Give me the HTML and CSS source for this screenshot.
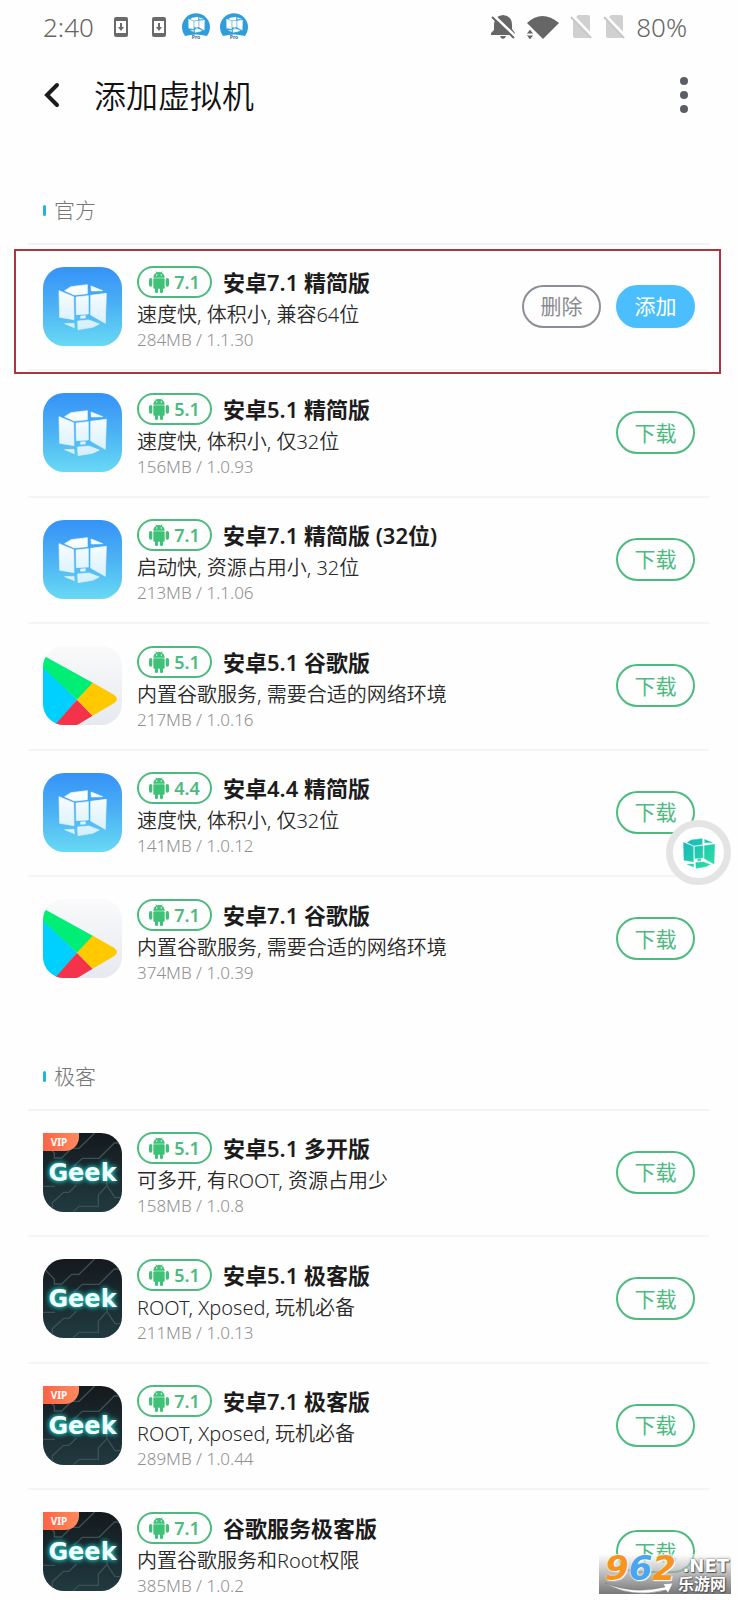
FILE: index.html
```html
<!DOCTYPE html>
<html lang="zh-CN">
<head>
    <meta charset="UTF-8">
    <meta name="viewport" content="width=device-width, initial-scale=1.0">
    <title>添加虚拟机</title>
    <link rel="stylesheet" href="styles.css">
</head>
<body>

<!-- Shared icons -->
<svg class="defs" width="0" height="0" aria-hidden="true">
    <defs>
        <linearGradient id="blue-bg" x1="0" y1="0" x2="0" y2="1">
            <stop offset="0" stop-color="#3592f7"/>
            <stop offset="0.5" stop-color="#4cb2f4"/>
            <stop offset="1" stop-color="#68d9f4"/>
        </linearGradient>
        <linearGradient id="panel" gradientUnits="userSpaceOnUse" x1="0" y1="60" x2="0" y2="198">
            <stop offset="0" stop-color="#ffffff"/>
            <stop offset="1" stop-color="#d3effc"/>
        </linearGradient>
        <linearGradient id="play-bg" x1="0" y1="0" x2="0" y2="1">
            <stop offset="0" stop-color="#fafafb"/>
            <stop offset="1" stop-color="#e6e9ef"/>
        </linearGradient>
        <linearGradient id="geek-bg" x1="0" y1="0" x2="0" y2="1">
            <stop offset="0" stop-color="#15191d"/>
            <stop offset="1" stop-color="#203a40"/>
        </linearGradient>
        <linearGradient id="teal" gradientUnits="userSpaceOnUse" x1="60" y1="60" x2="190" y2="198">
            <stop offset="0" stop-color="#17b5bd"/>
            <stop offset="1" stop-color="#2fe0a0"/>
        </linearGradient>
    </defs>
    <symbol id="cube" viewBox="9 9 237 237">
        <g stroke-width="2" stroke-linejoin="round">
            <path d="M74 80 93 68 142 62V89L103 93Z"/>
            <path d="M153 66 188 80 154 81Z"/>
            <path d="M57 80 101 98 102 167 59 160Z"/>
            <path d="M108 99 145 95V150L109 152Z"/>
            <path d="M152 94 199 88 196 178 152 153Z"/>
            <path d="M122 156 136 155V162L122 163Z"/>
            <path d="M74 179 102 178 103 191Z"/>
            <path d="M113 171 147 168 178 180 158 190 114 197Z"/>
        </g>
    </symbol>
    <symbol id="vm" viewBox="0 0 79 79">
        <rect width="79" height="79" fill="url(#blue-bg)"/>
        <use href="#cube" width="79" height="79" fill="url(#panel)" stroke="url(#panel)"/>
    </symbol>
    <symbol id="play" viewBox="0 0 237 237">
        <rect width="237" height="237" fill="url(#play-bg)"/>
        <path fill="#00d0ff" d="M0 60 102 161 40 237H0Z"/>
        <path fill="#f43249" d="M102 161 149 209 108 234Q103 237 98 237H36Z"/>
        <path fill="#ffc900" d="M147 109 214 147Q230 160 214 171L149 209 102 161Z"/>
        <path fill="#00ee76" d="M0 65V42Q2 31 9 33L149 110 102 161Z"/>
    </symbol>
    <symbol id="geek" viewBox="0 0 237 237">
        <rect width="237" height="237" fill="url(#geek-bg)"/>
        <g fill="none" stroke="#3b5155" stroke-width="4">
            <path d="M155 0 108 46H86L56 75H34V60L8 34"/>
            <path d="M237 30H214L168 76H118L92 100"/>
            <path d="M0 160H36M28 237V209L62 178H78L100 157"/>
            <path d="M90 237 108 220H166V186L192 158 216 194H237M192 158V130"/>
        </g>
    </symbol>
    <symbol id="android" viewBox="0 0 60 66">
        <path d="M13 20C13 12 17 7 22 5L18 0 24 4Q30 2 36 4L42 0 38 5C43 7 47 12 47 20Z"/>
        <rect x="13" y="22" width="34" height="31" rx="3"/>
        <rect x="0" y="21" width="10" height="26" rx="5"/>
        <rect x="50" y="21" width="10" height="26" rx="5"/>
        <rect x="18" y="46" width="9" height="20" rx="4"/>
        <rect x="33" y="46" width="9" height="20" rx="4"/>
        <circle cx="23" cy="12" r="2" fill="#fff"/>
        <circle cx="37" cy="12" r="2" fill="#fff"/>
    </symbol>
    <symbol id="update" viewBox="0 0 14 20">
        <path fill="#6a6a6a" fill-rule="evenodd" d="M2 0H12Q14 0 14 2V18Q14 20 12 20H2Q0 20 0 18V2Q0 0 2 0ZM2 4V16H12V4Z"/>
        <path fill="#6a6a6a" d="M6 6H8V10H10L7 14 4 10H6Z"/>
    </symbol>
    <symbol id="vm-round" viewBox="0 0 28 28">
        <path fill="#2f9ddb" d="M3 23A14 14 0 1 1 25 23Q14 20 3 23Z"/>
        <use href="#cube" x="1" y="-2" width="27" height="27" fill="#fff" stroke="#fff"/>
        <text x="14" y="26" class="pro" text-anchor="middle">Pro</text>
    </symbol>
    <symbol id="no-sim" viewBox="0 0 22 24">
        <path fill="#d0d0d0" d="M8 0H18Q20 0 20 2V21Q20 23 18 23H5Q3 23 3 21V6Z"/>
        <path stroke="#fff" stroke-width="3" d="M2 0 22 21"/>
        <path stroke="#c8c8c8" stroke-width="2" d="M1 2 21 23"/>
    </symbol>
</svg>

<div class="screen">
    <div class="status">
        <div class="status-left">
            <span>2:40</span>
            <svg class="ic-update"><use href="#update"/></svg>
            <svg class="ic-update"><use href="#update"/></svg>
            <svg class="ic-round"><use href="#vm-round"/></svg>
            <svg class="ic-round"><use href="#vm-round"/></svg>
        </div>
        <div class="status-right">
            <svg width="24" height="24" viewBox="0 0 24 24">
                <path fill="#666" d="M12 0Q21 1 21 10V14L24 18V20H0V18L3 15V9Q3 1 12 0ZM9 21H15Q14 24 12 24T9 21Z"/>
                <path stroke="#fff" stroke-width="3" d="M2 0 24 21"/>
                <path stroke="#666" stroke-width="2" d="M1 2 23 23"/>
            </svg>
            <svg width="33" height="24" viewBox="0 0 33 24">
                <path fill="#666" d="M1 8Q16-6 33 8L17 24Z"/>
                <path fill="#666" stroke="#fff" d="M0 19 4 14 8 19ZM0 20H8L4 25Z"/>
            </svg>
            <svg width="22" height="24"><use href="#no-sim"/></svg>
            <svg width="22" height="24"><use href="#no-sim"/></svg>
            <span>80%</span>
        </div>
    </div>

    <header class="topbar">
        <button class="icon-btn" type="button" aria-label="返回">
            <svg width="16" height="26" viewBox="0 0 16 26"><path d="M13 3 3 13 13 23" fill="none" stroke="#1c1c1c" stroke-width="4" stroke-linecap="round"/></svg>
        </button>
        <h1>添加虚拟机</h1>
        <button class="icon-btn more" type="button" aria-label="更多">
            <svg width="8" height="38" viewBox="0 0 8 38" fill="#5c5e66"><circle cx="4" cy="5" r="4"/><circle cx="4" cy="19" r="4"/><circle cx="4" cy="33" r="4"/></svg>
        </button>
    </header>

    <!-- Official images -->
    <section>
        <h2>官方</h2>
        <ul>
            <li class="row selected">
                <div class="icon"><svg><use href="#vm"/></svg></div>
                <div class="info">
                    <h3><span class="badge"><svg><use href="#android"/></svg>7.1</span>安卓7.1 精简版</h3>
                    <p>速度快, 体积小, 兼容64位</p>
                    <small>284MB / 1.1.30</small>
                </div>
                <button class="btn delete" type="button">删除</button>
                <button class="btn add" type="button">添加</button>
            </li>
            <li class="row">
                <div class="icon"><svg><use href="#vm"/></svg></div>
                <div class="info">
                    <h3><span class="badge"><svg><use href="#android"/></svg>5.1</span>安卓5.1 精简版</h3>
                    <p>速度快, 体积小, 仅32位</p>
                    <small>156MB / 1.0.93</small>
                </div>
                <button class="btn" type="button">下载</button>
            </li>
            <li class="row">
                <div class="icon"><svg><use href="#vm"/></svg></div>
                <div class="info">
                    <h3><span class="badge"><svg><use href="#android"/></svg>7.1</span>安卓7.1 精简版 (32位)</h3>
                    <p>启动快, 资源占用小, 32位</p>
                    <small>213MB / 1.1.06</small>
                </div>
                <button class="btn" type="button">下载</button>
            </li>
            <li class="row">
                <div class="icon"><svg><use href="#play"/></svg></div>
                <div class="info">
                    <h3><span class="badge"><svg><use href="#android"/></svg>5.1</span>安卓5.1 谷歌版</h3>
                    <p>内置谷歌服务, 需要合适的网络环境</p>
                    <small>217MB / 1.0.16</small>
                </div>
                <button class="btn" type="button">下载</button>
            </li>
            <li class="row">
                <div class="icon"><svg><use href="#vm"/></svg></div>
                <div class="info">
                    <h3><span class="badge"><svg><use href="#android"/></svg>4.4</span>安卓4.4 精简版</h3>
                    <p>速度快, 体积小, 仅32位</p>
                    <small>141MB / 1.0.12</small>
                </div>
                <button class="btn" type="button">下载</button>
            </li>
            <li class="row">
                <div class="icon"><svg><use href="#play"/></svg></div>
                <div class="info">
                    <h3><span class="badge"><svg><use href="#android"/></svg>7.1</span>安卓7.1 谷歌版</h3>
                    <p>内置谷歌服务, 需要合适的网络环境</p>
                    <small>374MB / 1.0.39</small>
                </div>
                <button class="btn" type="button">下载</button>
            </li>
        </ul>
    </section>

    <!-- Geek images -->
    <section>
        <h2>极客</h2>
        <ul>
            <li class="row">
                <div class="icon geek vip"><svg><use href="#geek"/></svg><span class="geek-name">Geek</span><span class="vip-tag">VIP</span></div>
                <div class="info">
                    <h3><span class="badge"><svg><use href="#android"/></svg>5.1</span>安卓5.1 多开版</h3>
                    <p>可多开, 有ROOT, 资源占用少</p>
                    <small>158MB / 1.0.8</small>
                </div>
                <button class="btn" type="button">下载</button>
            </li>
            <li class="row">
                <div class="icon geek"><svg><use href="#geek"/></svg><span class="geek-name">Geek</span></div>
                <div class="info">
                    <h3><span class="badge"><svg><use href="#android"/></svg>5.1</span>安卓5.1 极客版</h3>
                    <p>ROOT, Xposed, 玩机必备</p>
                    <small>211MB / 1.0.13</small>
                </div>
                <button class="btn" type="button">下载</button>
            </li>
            <li class="row">
                <div class="icon geek vip"><svg><use href="#geek"/></svg><span class="geek-name">Geek</span><span class="vip-tag">VIP</span></div>
                <div class="info">
                    <h3><span class="badge"><svg><use href="#android"/></svg>7.1</span>安卓7.1 极客版</h3>
                    <p>ROOT, Xposed, 玩机必备</p>
                    <small>289MB / 1.0.44</small>
                </div>
                <button class="btn" type="button">下载</button>
            </li>
            <li class="row">
                <div class="icon geek vip"><svg><use href="#geek"/></svg><span class="geek-name">Geek</span><span class="vip-tag">VIP</span></div>
                <div class="info">
                    <h3><span class="badge"><svg><use href="#android"/></svg>7.1</span>谷歌服务极客版</h3>
                    <p>内置谷歌服务和Root权限</p>
                    <small>385MB / 1.0.2</small>
                </div>
                <button class="btn" type="button">下载</button>
            </li>
        </ul>
    </section>

    <!-- Floating VM switcher -->
    <button class="float-ball" type="button" aria-label="虚拟机">
        <svg><use href="#cube" fill="url(#teal)" stroke="url(#teal)"/></svg>
    </button>

    <!-- Site stamp -->
    <div class="stamp">
        <span class="stamp-num">9<b>6</b>2</span>
        <span class="stamp-net">.NET</span>
        <span class="stamp-cn">乐游网</span>
        <svg class="stamp-swoosh" viewBox="0 0 68 12"><path fill="#fff" stroke="#777" stroke-width="0.5" d="M0 1Q28 13 60 5L58 2 68 1 63 11 61 8Q26 17 0 1Z"/></svg>
    </div>
</div>

</body>
</html>
```
FILE: styles.css
```css
* {
    box-sizing: border-box;
}
body {
    margin: 0;
    background-color: #fefefe;
    color: #1c1c1c;
    font-family: "Noto Sans", "Noto Sans CJK SC", sans-serif;
}
h1, h2, h3, p, ul {
    margin: 0;
    padding: 0;
    font-weight: 400;
}
ul {
    list-style: none;
}
svg {
    display: block;
    flex: none;
}
button {
    font-family: inherit;
    cursor: pointer;
}
.defs {
    position: absolute;
}
.screen {
    position: relative;
    height: 100vh;
    overflow: hidden;
}

/* Status bar */
.status {
    display: flex;
    justify-content: space-between;
    height: 54px;
    padding: 0 51px 0 43px;
    color: #666;
    font-size: 26px;
    font-weight: 300;
}
.status-left, .status-right {
    display: flex;
    align-items: center;
}
.status-right {
    gap: 11px;
}
.ic-update {
    width: 14px;
    height: 20px;
    margin-left: 20px;
}
.ic-update + .ic-update {
    margin-left: 24px;
}
.ic-round {
    width: 28px;
    height: 28px;
    margin-left: 10px;
}
.ic-update + .ic-round {
    margin-left: 16px;
}
.pro {
    font-size: 5px;
    font-weight: 700;
    fill: #3d6f8c;
}

/* Title bar */
.topbar {
    display: flex;
    align-items: center;
    height: 84px;
    padding: 0 50px 2px 44px;
}
.topbar h1 {
    flex: 1;
    padding-top: 2px;
    margin-left: 34px;
    color: #111;
    font-size: 32px;
    font-weight: 350;
    line-height: 40px;
}
.icon-btn {
    padding: 0;
    border: none;
    background: none;
}

/* Sections */
section {
    margin: 57px 29px 0 28px;
}
h2 {
    display: flex;
    align-items: center;
    gap: 8px;
    padding: 0 0 18px 15px;
    border-bottom: 2px solid #f3f3f3;
    color: #777;
    font-size: 21px;
    font-weight: 300;
    line-height: 30px;
}
h2::before {
    content: "";
    width: 3px;
    height: 11px;
    border-radius: 2px;
    background-color: #22b4dc;
}

/* Rows */
.row {
    position: relative;
    display: flex;
    align-items: center;
    height: 126px;
    padding: 0 14px 2px 15px;
    border-bottom: 2px solid #f5f5f5;
}
.row:nth-child(even) {
    height: 127px;
}
.row:last-child {
    border-bottom-color: transparent;
}
.selected::after {
    content: "";
    position: absolute;
    inset: 4px -12px -5px -14px;
    border: 2px solid #ab363f;
    pointer-events: none;
}
.icon {
    position: relative;
    flex: none;
    width: 79px;
    height: 79px;
    border-radius: 21px;
    overflow: hidden;
}
.icon svg {
    width: 100%;
    height: 100%;
}
.vip {
    border-top-left-radius: 0;
}
.geek-name {
    position: absolute;
    inset: 0;
    color: #f2ffff;
    font-family: "DejaVu Sans", sans-serif;
    font-size: 24px;
    font-weight: 700;
    line-height: 80px;
    text-align: center;
    text-shadow: 0 0 4px #25d5cf, 0 0 6px #1fa9a8;
}
.vip-tag {
    position: absolute;
    top: 0;
    left: 0;
    width: 36px;
    height: 18px;
    padding-right: 4px;
    border-bottom-right-radius: 14px;
    background: linear-gradient(90deg, #ff6246, #ff8a5c);
    color: #fff;
    font-size: 10px;
    font-weight: 700;
    line-height: 18px;
    text-align: center;
}
.info {
    flex: 1;
    padding: 2px 0 0 15px;
    white-space: nowrap;
}
.info h3 {
    display: flex;
    align-items: center;
    gap: 11px;
    font-size: 22px;
    font-weight: 600;
    line-height: 32px;
}
.info p {
    color: #2a2a2a;
    font-size: 20px;
    font-weight: 350;
    line-height: 34px;
}
.info small {
    display: block;
    color: #909090;
    font-size: 17px;
    font-weight: 300;
    line-height: 16px;
}
.badge {
    display: flex;
    align-items: center;
    justify-content: center;
    gap: 5px;
    width: 75px;
    height: 32px;
    border: 2px solid #4dbb80;
    border-radius: 16px;
    color: #4dbb80;
    font-size: 18px;
}
.badge svg {
    width: 20px;
    height: 22px;
    fill: #3fc277;
}
.btn {
    width: 79px;
    height: 43px;
    padding: 0 0 2px;
    border: 2px solid #4dbb80;
    border-radius: 22px;
    background-color: transparent;
    color: #4dbb80;
    font-size: 21px;
}
.delete {
    margin-right: 15px;
    border-color: #8e8e96;
    color: #8a8a90;
}
.add {
    border-color: #4bbffe;
    background-color: #4bbffe;
    color: #fff;
}

/* Floating ball */
.float-ball {
    position: absolute;
    top: 820px;
    right: 7px;
    display: flex;
    align-items: center;
    justify-content: center;
    width: 65px;
    height: 65px;
    padding: 0;
    border: 7px solid #e4e4e4;
    border-radius: 50%;
    background-color: #fff;
}
.float-ball svg {
    flex: none;
    width: 52px;
    height: 52px;
}

/* Stamp in the corner */
.stamp {
    position: absolute;
    right: 7px;
    bottom: 6px;
    width: 132px;
    height: 40px;
    background: linear-gradient(rgba(255, 255, 255, 0.5), #777);
    color: #fff;
    font-weight: 700;
    line-height: 1;
}
.stamp span, .stamp-swoosh {
    position: absolute;
}
.stamp-num {
    left: 6px;
    bottom: 9px;
    color: #f7941d;
    font-family: "DejaVu Sans", sans-serif;
    font-size: 34px;
    font-style: italic;
    text-shadow: 0 0 2px #fff, 1px 1px 1px #fff;
}
.stamp-num b {
    color: #4aa5ec;
}
.stamp-net {
    right: 2px;
    top: 3px;
    font-family: "DejaVu Sans", sans-serif;
    font-size: 18px;
    text-shadow: 0 0 2px #444, 1px 1px 1px #555;
}
.stamp-cn {
    right: 5px;
    bottom: 2px;
    font-size: 16px;
    text-shadow: 0 0 2px #444, 1px 1px 1px #555;
}
.stamp-swoosh {
    left: 6px;
    bottom: 0;
    width: 68px;
    height: 12px;
}
```
